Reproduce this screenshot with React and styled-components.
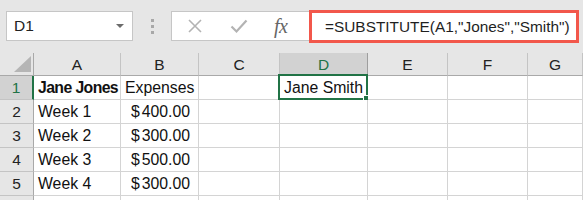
import React from "react";
import styled, { createGlobalStyle } from "styled-components";

const Global = createGlobalStyle`
  html, body { margin: 0; padding: 0; background: #ffffff; overflow: hidden; }
  body { font-family: "Liberation Sans", Arial, sans-serif; }
`;

const Page = styled.div`
  width: 583px;
  height: 200px;
  overflow: hidden;
  background: #ffffff;
`;

const Toolbar = styled.div`
  height: 53px;
  background: #e6e6e6;
  display: flex;
  align-items: flex-start;
  padding-left: 6px;
  box-sizing: border-box;
`;

const NameBox = styled.div`
  margin-top: 11px;
  width: 127px;
  height: 30px;
  box-sizing: border-box;
  background: #ffffff;
  border: 1px solid #c6c6c6;
  display: flex;
  align-items: center;
  justify-content: space-between;
  padding: 0 8px 0 7px;
  font-size: 15.5px;
  color: #222;
`;

const DropArrow = styled.span`
  width: 0;
  height: 0;
  border-left: 4px solid transparent;
  border-right: 4px solid transparent;
  border-top: 4px solid #6b6b6b;
`;

const Grip = styled.div`
  width: 38px;
  height: 53px;
  display: flex;
  flex-direction: column;
  align-items: center;
  justify-content: flex-start;
  padding-top: 19px;
  box-sizing: border-box;
  gap: 3px;
`;

const GripDot = styled.span`
  width: 3px;
  height: 3px;
  background: #a8a8a8;
`;

const FxButtons = styled.div`
  margin-top: 11px;
  width: 138px;
  height: 30px;
  box-sizing: border-box;
  background: #ffffff;
  border: 1px solid #c6c6c6;
  border-right: none;
  display: flex;
  align-items: center;
  padding-left: 14px;
  gap: 26px;
`;

const IconButton = styled.span`
  width: 18px;
  height: 18px;
  display: flex;
  align-items: center;
  justify-content: center;
`;

const FxLabel = styled.span`
  font-family: "Liberation Serif", "DejaVu Serif", serif;
  font-style: italic;
  font-size: 20px;
  color: #666666;
  margin-left: 0px;
  letter-spacing: -0.5px;
`;

const FormulaBox = styled.div`
  margin-top: 10px;
  width: 270px;
  height: 33px;
  box-sizing: border-box;
  border: 3px solid #f2574b;
  background: #ffffff;
  display: flex;
  align-items: center;
  padding-left: 13px;
  font-size: 15.4px;
  color: #1f1f1f;
  white-space: nowrap;
`;

const Sheet = styled.div`
  display: grid;
  grid-template-columns: 34px 87px 78px 81px 88px 80px 80px 1fr;
  grid-template-rows: 23px repeat(5, 24px) 24px;
`;

const Corner = styled.div`
  background: #e6e6e6;
  border-right: 1px solid #a9a9a9;
  border-bottom: 1px solid #a9a9a9;
  position: relative;
  display: flex;
  align-items: flex-end;
  justify-content: flex-end;
  padding: 0 2px 3px 0;
  box-sizing: border-box;
`;

const ColHead = styled.div`
  background: ${(p) => (p.$selected ? "#d2d2d2" : "#e6e6e6")};
  color: ${(p) => (p.$selected ? "#217346" : "#222")};
  border-right: 1px solid ${(p) => (p.$selected ? "#9e9e9e" : "#c4c4c4")};
  border-bottom: 1px solid #a9a9a9;
  box-sizing: border-box;
  display: flex;
  align-items: center;
  justify-content: center;
  font-size: 15.5px;
  padding-top: 2px;
`;

const RowHead = styled.div`
  background: ${(p) => (p.$selected ? "#d2d2d2" : "#e6e6e6")};
  color: ${(p) => (p.$selected ? "#217346" : "#222")};
  border-right: ${(p) => (p.$selected ? "2px solid #217346" : "1px solid #a9a9a9")};
  border-bottom: 1px solid #c4c4c4;
  box-sizing: border-box;
  display: flex;
  align-items: center;
  justify-content: center;
  font-size: 15.5px;
`;

const Cell = styled.div`
  position: relative;
  background: #ffffff;
  border-right: 1px solid #d4d4d4;
  border-bottom: 1px solid #d4d4d4;
  box-sizing: border-box;
  display: flex;
  align-items: center;
  justify-content: ${(p) => (p.$align === "right" ? "flex-end" : "flex-start")};
  padding: 1px ${(p) => (p.$align === "right" ? "8px" : "0")} 0 ${(p) => (p.$align === "right" ? "0" : "4px")};
  font-size: 15.8px;
  font-weight: ${(p) => (p.$bold ? 700 : 400)};
  letter-spacing: ${(p) => (p.$bold ? "-0.6px" : "0")};
  color: #111;
  white-space: nowrap;
`;

const Selection = styled.span`
  position: absolute;
  left: -2px;
  top: -2px;
  right: -1px;
  bottom: -1px;
  border: 2px solid #217346;
  pointer-events: none;
`;

const FillHandle = styled.span`
  position: absolute;
  right: -4px;
  bottom: -4px;
  width: 5px;
  height: 5px;
  background: #217346;
  border: 1px solid #ffffff;
`;

const Dollar = styled.span`
  margin-right: 2px;
`;

const columns = ["A", "B", "C", "D", "E", "F", "G"];

const rows = [
  { a: "Jane Jones", b: "Expenses", d: "Jane Smith", bold: true },
  { a: "Week 1", b: "400.00", money: true },
  { a: "Week 2", b: "300.00", money: true },
  { a: "Week 3", b: "500.00", money: true },
  { a: "Week 4", b: "300.00", money: true },
  { a: "", b: "" },
];

const CloseIcon = () => (
  <svg width="16" height="16" viewBox="0 0 16 16">
    <path d="M2 2 L14 14 M14 2 L2 14" stroke="#b3b3b3" strokeWidth="1.6" fill="none" />
  </svg>
);

const CheckIcon = () => (
  <svg width="18" height="16" viewBox="0 0 18 16">
    <path d="M1.5 8.5 L6.5 13.5 L16.5 2.5" stroke="#b3b3b3" strokeWidth="2.2" fill="none" />
  </svg>
);

const CornerTriangle = () => (
  <svg width="17" height="16" viewBox="0 0 17 16">
    <polygon points="17,0 17,16 0,16" fill="#b5b5b5" />
  </svg>
);

export default function App() {
  return (
    <Page>
      <Global />
      <Toolbar>
        <NameBox>
          <span>D1</span>
          <DropArrow />
        </NameBox>
        <Grip>
          <GripDot />
          <GripDot />
          <GripDot />
        </Grip>
        <FxButtons>
          <IconButton>
            <CloseIcon />
          </IconButton>
          <IconButton>
            <CheckIcon />
          </IconButton>
          <FxLabel>fx</FxLabel>
        </FxButtons>
        <FormulaBox>=SUBSTITUTE(A1,"Jones","Smith")</FormulaBox>
      </Toolbar>
      <Sheet>
        <Corner>
          <CornerTriangle />
        </Corner>
        {columns.map((c) => (
          <ColHead key={c} $selected={c === "D"}>
            {c}
          </ColHead>
        ))}
        {rows.map((r, i) => (
          <React.Fragment key={i}>
            <RowHead $selected={i === 0}>{i < 5 ? i + 1 : ""}</RowHead>
            <Cell $bold={r.bold}>{r.a}</Cell>
            <Cell $align={r.money ? "right" : "left"}>
              {r.money ? (
                <>
                  <Dollar>$</Dollar>
                  {r.b}
                </>
              ) : (
                r.b
              )}
            </Cell>
            <Cell />
            <Cell>
              {r.d}
              {i === 0 && (
                <Selection>
                  <FillHandle />
                </Selection>
              )}
            </Cell>
            <Cell />
            <Cell />
            <Cell />
          </React.Fragment>
        ))}
      </Sheet>
    </Page>
  );
}
